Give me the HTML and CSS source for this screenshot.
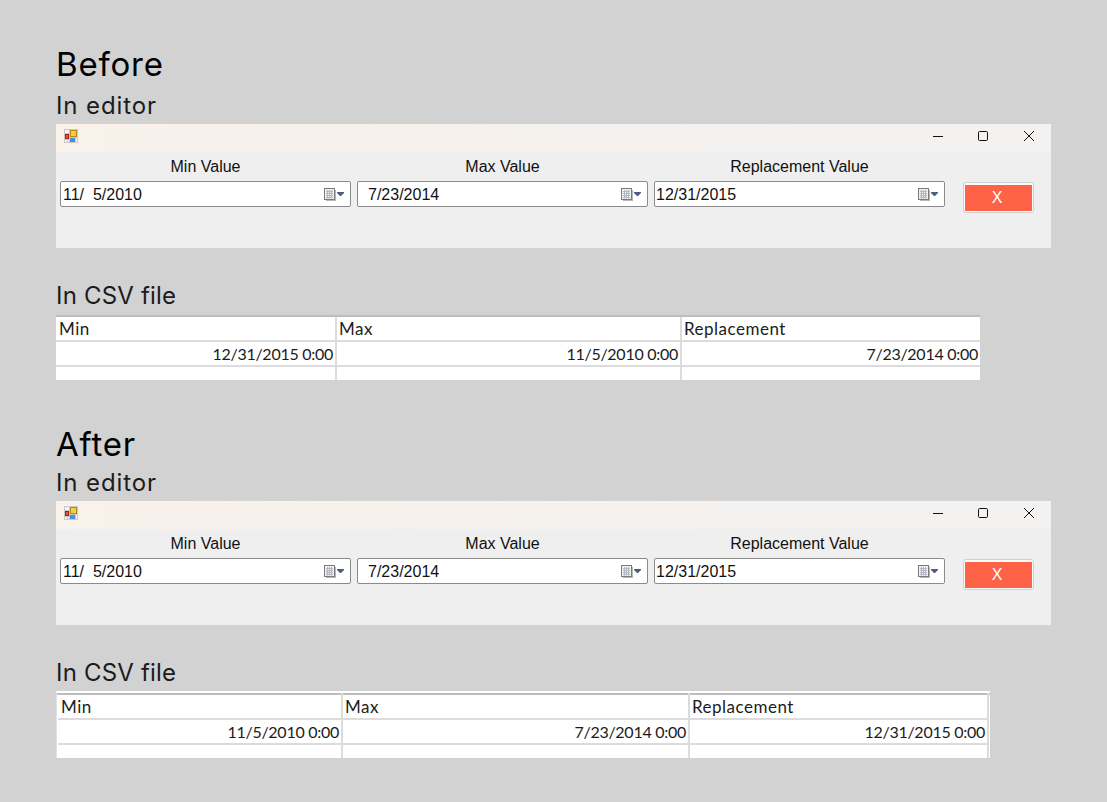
FILE: index.html
```html
<!DOCTYPE html>
<html lang="en">
<head>
<meta charset="utf-8">
<title>Before and After</title>
<link rel="stylesheet" href="styles.css">
</head>
<body>
<svg class="defs" width="0" height="0" aria-hidden="true">
  <defs>
    <symbol id="app" viewBox="0 0 14 14">
      <rect width="14" height="14" fill="#c9c9c9"/>
      <rect x="1" y="1" width="4" height="3" fill="#f5f5f5"/>
      <rect x="6" y="1" width="7" height="7" fill="#b98a10"/>
      <rect x="7" y="2" width="5" height="5" fill="#f6cf45"/>
      <rect x="1" y="5" width="4" height="5" fill="#a81c12"/>
      <rect x="2" y="6" width="2" height="3" fill="#e8584a"/>
      <rect x="1" y="11" width="2" height="2" fill="#f5f5f5"/>
      <rect x="4" y="11" width="1" height="2" fill="#f5f5f5"/>
      <rect x="6" y="9" width="5" height="4" fill="#4d8be0"/>
      <rect x="12" y="9" width="1" height="4" fill="#f5f5f5"/>
    </symbol>
    <symbol id="picker" viewBox="0 0 20 14">
      <rect x="2" y="3" width="10" height="11" fill="#b9b6b3"/>
      <rect x="0.500" y="1.500" width="10" height="11" fill="#eef0f3" stroke="#7d7976"/>
      <path d="M2 4.500h7M2 6.500h7M2 8.500h7M2 10.500h7M3.500 3v8.500M5.500 3v8.500M7.500 3v8.500" stroke="#b4b8c0"/>
      <path d="M13 5h7v1l-3 3h-1l-3-3z" fill="#4a5d85"/>
    </symbol>
    <symbol id="min" viewBox="0 0 12 12"><path d="M2 6.500h10" stroke="#111"/></symbol>
    <symbol id="max" viewBox="0 0 12 12"><rect x="1.500" y="1.500" width="9" height="9" rx="1.200" fill="none" stroke="#111"/></symbol>
    <symbol id="close" viewBox="0 0 12 12"><path d="M1 1l10 10M11 1L1 11" stroke="#111"/></symbol>
  </defs>
</svg>

<main class="page">
  <section class="block">
    <h1 class="title">Before</h1>
    <h2 class="sub sub-editor">In editor</h2>
    <div class="window">
      <div class="titlebar">
        <svg class="app-icon"><use href="#app"/></svg>
        <div class="controls">
          <svg class="ctl"><use href="#min"/></svg>
          <svg class="ctl"><use href="#max"/></svg>
          <svg class="ctl"><use href="#close"/></svg>
        </div>
      </div>
      <div class="form">
        <div class="field"><label class="label">Min Value</label><div class="date"><span class="val near">11/  5/2010</span><svg class="picker"><use href="#picker"/></svg></div></div>
        <div class="field"><label class="label">Max Value</label><div class="date"><span class="val">7/23/2014</span><svg class="picker"><use href="#picker"/></svg></div></div>
        <div class="field"><label class="label">Replacement Value</label><div class="date"><span class="val flush">12/31/2015</span><svg class="picker"><use href="#picker"/></svg></div></div>
        <button class="remove" type="button"><span class="remove-in">X</span></button>
      </div>
    </div>
    <h2 class="sub sub-csv">In CSV file</h2>
    <div class="sheet sheet-a">
      <div class="cell">Min</div><div class="cell">Max</div><div class="cell">Replacement</div>
      <div class="cell num">12/31/2015 0:00</div><div class="cell num">11/5/2010 0:00</div><div class="cell num">7/23/2014 0:00</div>
      <div class="cell end"></div><div class="cell end"></div><div class="cell end"></div>
    </div>
  </section>

  <section class="block after">
    <h1 class="title">After</h1>
    <h2 class="sub sub-editor">In editor</h2>
    <div class="window">
      <div class="titlebar">
        <svg class="app-icon"><use href="#app"/></svg>
        <div class="controls">
          <svg class="ctl"><use href="#min"/></svg>
          <svg class="ctl"><use href="#max"/></svg>
          <svg class="ctl"><use href="#close"/></svg>
        </div>
      </div>
      <div class="form">
        <div class="field"><label class="label">Min Value</label><div class="date"><span class="val near">11/  5/2010</span><svg class="picker"><use href="#picker"/></svg></div></div>
        <div class="field"><label class="label">Max Value</label><div class="date"><span class="val">7/23/2014</span><svg class="picker"><use href="#picker"/></svg></div></div>
        <div class="field"><label class="label">Replacement Value</label><div class="date"><span class="val flush">12/31/2015</span><svg class="picker"><use href="#picker"/></svg></div></div>
        <button class="remove" type="button"><span class="remove-in">X</span></button>
      </div>
    </div>
    <h2 class="sub sub-csv">In CSV file</h2>
    <div class="sheet sheet-b">
      <div class="cell">Min</div><div class="cell">Max</div><div class="cell">Replacement</div>
      <div class="cell num">11/5/2010 0:00</div><div class="cell num">7/23/2014 0:00</div><div class="cell num">12/31/2015 0:00</div>
      <div class="cell end"></div><div class="cell end"></div><div class="cell end"></div>
    </div>
  </section>
</main>
</body>
</html>
```

FILE: styles.css
```css
* { box-sizing: border-box; }
html, body { margin: 0; height: 100%; }
body { background: #d2d2d2; overflow: hidden; }
.defs { display: block; height: 0; }
.page { padding: 44px 0 0 56px; }
.after { margin-top: 44px; }

.title, .sub {
  margin: 0;
  font-family: Inter, "Open Sans", sans-serif;
  font-weight: 400;
  color: #000;
}
.title { font-size: 33px; line-height: 40px; height: 40px; letter-spacing: .8px; }
.sub { font-size: 24px; line-height: 28px; height: 28px; color: #1c1c1c; }
.sub-editor { margin-top: 8px; margin-bottom: 4px; letter-spacing: .9px; }
.sub-csv { margin-top: 34px; margin-bottom: 5px; letter-spacing: .2px; }
.after .sub-editor { margin-top: 5px; }
.after .sub-csv { margin-bottom: 4px; }

.window { width: 995px; height: 124px; background: #efefef; }
.titlebar {
  height: 28px;
  display: flex;
  align-items: center;
  padding: 0 0 4px 8px;
  background: linear-gradient(90deg, #f9f2eb 0%, #f7f1ec 35%, #f3f2f1 75%);
}
.app-icon { width: 14px; height: 14px; }
.controls { margin-left: auto; display: flex; gap: 34px; padding-right: 16px; }
.ctl { width: 12px; height: 12px; }

.form { display: flex; padding: 3px 0 0 4px; gap: 6px; align-items: flex-start; }
.field { width: 291px; display: flex; flex-direction: column; }
.label {
  text-align: center;
  font: 16px/24px "Liberation Sans", Arial, sans-serif;
  color: #111;
  height: 26px;
}
.date {
  height: 26px;
  background: #fff;
  border: 1px solid #8b8b8b;
  border-radius: 2px;
  display: flex;
  align-items: center;
  padding: 2px 6px 0 1px;
  font: 16px/22px "Liberation Sans", Arial, sans-serif;
  color: #111;
}
.val { padding-left: 9px; white-space: pre; }
.val.near { padding-left: 1px; }
.val.flush { padding-left: 0; }
.picker { width: 20px; height: 14px; margin: -2px 0 0 auto; }

.remove {
  margin: 27px 0 0 12px;
  width: 71px;
  height: 31px;
  padding: 2px 1px 1px;
  background: #fbfbfb;
  border: 1px solid #d0d0d0;
  border-radius: 3px;
  display: flex;
}
.remove-in {
  flex: 1;
  background: #ff6347;
  color: #fff;
  font: 16px/26px "Liberation Sans", Arial, sans-serif;
  text-align: center;
  padding-right: 3px;
}

.sheet {
  display: grid;
  background: #fff;
  font: 17px/24px Lato, "Open Sans", sans-serif;
  color: #1b1b1b;
  border-top: 2px solid #bdbdbd;
  grid-template-rows: 25px 25px 13px;
}
.sheet-a { width: 924px; grid-template-columns: 281px 345px 298px; }
.sheet-b {
  width: 934px;
  padding-left: 1px;
  grid-template-columns: 285px 347px 299px;
  border-top-color: #fff;
  border-left: 1px solid #e2e2e2;
  box-shadow: inset 0 2px #bdbdbd;
  grid-template-rows: 27px 25px 13px;
}
.cell {
  border-right: 2px solid #dcdcdc;
  border-bottom: 2px solid #dcdcdc;
  padding: 0 2px 0 3px;
  white-space: nowrap;
  letter-spacing: .5px;
}
.cell:not(:nth-child(3n+1)) { padding-left: 2px; }
.sheet-b .cell:nth-child(-n+3) { padding-top: 2px; }
.sheet-a .cell:nth-child(3n) { border-right: 0; }
.num { text-align: right; font-size: 16px; letter-spacing: -.27px; }
.end { border-bottom: 0; }
```
